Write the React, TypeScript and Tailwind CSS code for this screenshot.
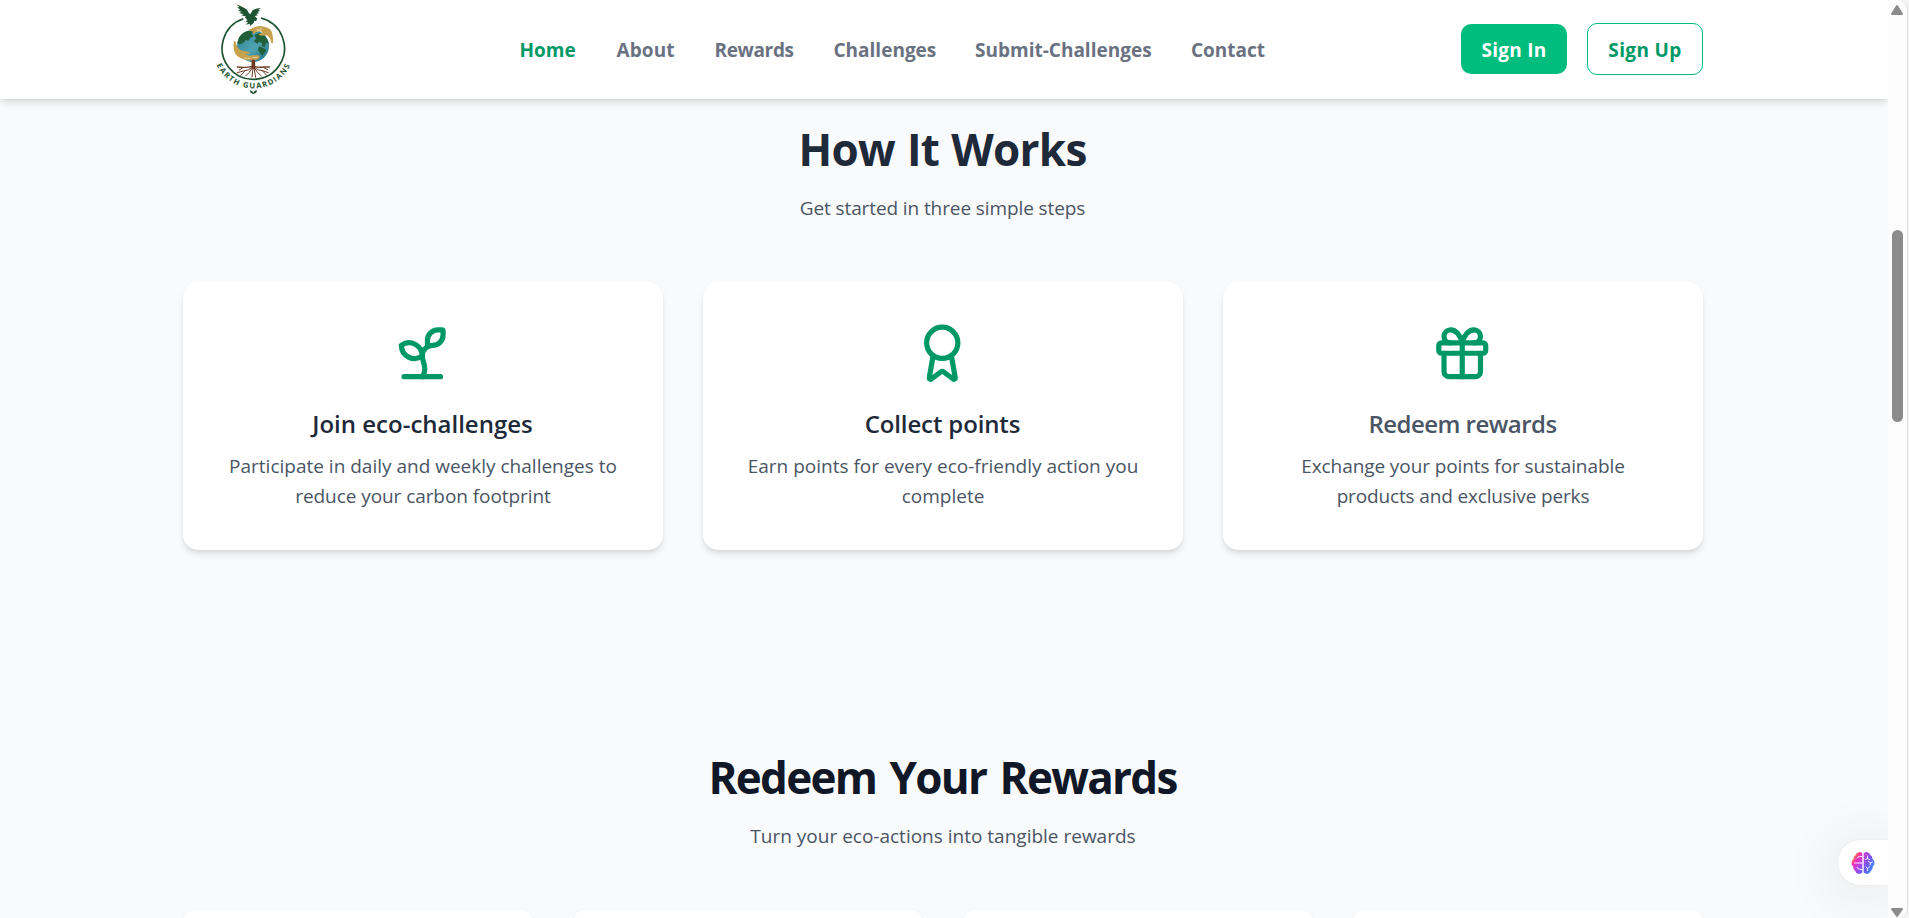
import type { ReactNode } from "react";

const NAV = [
  { label: "Home", style: "text-[#009966] w-[57px]" },
  { label: "About", style: "text-[#6a7282] w-[58px] tracking-[0.1px]" },
  { label: "Rewards", style: "text-[#6a7282] w-[79px] tracking-[-0.35px]" },
  { label: "Challenges", style: "text-[#6a7282] w-[101.5px]" },
  { label: "Submit-Challenges", style: "text-[#6a7282] w-[176px]" },
  { label: "Contact", style: "text-[#6a7282] w-[73px]" },
];

function Logo() {
  return (
    <svg className="block h-[99px] w-[110px]" viewBox="0 0 330 297" role="img" aria-label="Earth Guardians">
      <defs>
        <path id="logo-arc" d="M50 195A122.500 122.500 0 0 0 282 161" />
        <linearGradient id="ocean" x1="0" y1="0" x2="1" y2="1">
          <stop offset="0" stopColor="#2b7f93" />
          <stop offset="0.55" stopColor="#4fa3b2" />
          <stop offset="1" stopColor="#1c6a7d" />
        </linearGradient>
      </defs>
      <path d="M130 56A93.500 93.500 0 1 0 183 54" fill="none" stroke="#1d5330" strokeWidth="5" />
      <path
        d="M110 13L126 20Q142 26 146 39L151 43L158 31Q166 25 183 24L175 30L181 32L172 36L178 39L169 42L174 46L164 48L172 56L168 63L162 62L161 69L150 78L149 71L137 74L145 66L136 65L142 60L134 51L140 50L124 46L131 43L117 39L125 36L113 31L121 29L111 22L118 22Z"
        fill="#1d5330"
      />
      <circle cx="159" cy="138" r="48" fill="url(#ocean)" />
      <path
        d="M117 112Q128 96 143 93L160 94L154 101L161 108L151 113L145 122L137 120L130 129L119 133L112 129Z"
        fill="#22603a"
      />
      <path
        d="M164 105L178 98L191 103Q204 117 207 133L198 128L194 142L185 138L187 130L176 126L172 132L161 123L168 116Z"
        fill="#22603a"
      />
      <path d="M177 139L190 144L199 150L187 167L180 160L174 150Z" fill="#22603a" />
      <path
        d="M145 91L158 84Q180 75 191 80Q206 82 213 91Q220 104 219 129L214 129Q212 112 200 106L183 107L174 102L188 99L184 94L169 96L157 104L160 95Z"
        fill="#c8a14d"
      />
      <path
        d="M102 123L107 125Q111 144 122 151L145 155L151 161L136 161L148 168L160 166L177 166L179 174Q165 184 141 180Q114 176 105 160Q98 143 102 123Z"
        fill="#c8a14d"
      />
      <path d="M169 90l17-4M171 94l12-3M132 174l19 1M158 173l14-1" stroke="#fff" strokeWidth="1.500" />
      <g fill="none" stroke="#6d3a22" strokeLinecap="round">
        <path d="M160 184v18" strokeWidth="11" />
        <path d="M157 199Q142 203 130 202L112 201M163 199Q176 203 190 201L208 201" strokeWidth="4" />
        <path
          d="M157 202Q146 212 130 213L112 218M163 202Q175 212 190 213L205 218M156 205Q149 218 137 228M164 205Q171 218 184 228M159 204L156 231M162 204L167 232M136 211L122 227M186 211L200 226M129 203L118 210M191 203L203 209"
          strokeWidth="3"
        />
      </g>
      <text className="font-['Open_Sans',sans-serif] font-bold" fontSize="23" fill="#1d5330">
        <textPath href="#logo-arc" textLength="274" lengthAdjust="spacing">
          EARTH GUARDIANS
        </textPath>
      </text>
      <path d="M160 282Q149 280 150 271Q157 272 160 278Q164 271 171 271Q171 280 160 282Z" fill="#1d5330" />
    </svg>
  );
}

function Icon({ children }: { children: ReactNode }) {
  return (
    <svg
      className="mr-[2px] size-[62.5px] text-[#009966]"
      viewBox="0 0 24 24"
      fill="none"
      stroke="currentColor"
      strokeWidth="2"
      strokeLinecap="round"
      strokeLinejoin="round"
    >
      {children}
    </svg>
  );
}

const STEPS = [
  {
    title: "Join eco-challenges",
    titleStyle: "text-[#1e2939]",
    lines: [
      { text: "Participate in daily and weekly challenges to", style: "" },
      { text: "reduce your carbon footprint", style: "tracking-[-0.07px]" },
    ],
    icon: (
      <Icon>
        <path d="M14 9.536V7a4 4 0 0 1 4-4h1.5a.5.5 0 0 1 .5.5V5a4 4 0 0 1-4 4 4 4 0 0 0-4 4c0 2 1 3 1 5a5 5 0 0 1-1 3" />
        <path d="M4 9a5 5 0 0 1 8 4 5 5 0 0 1-8-4" />
        <path d="M5 21h14" />
      </Icon>
    ),
  },
  {
    title: "Collect points",
    titleStyle: "text-[#1e2939] tracking-[-0.13px]",
    lines: [
      { text: "Earn points for every eco-friendly action you", style: "" },
      { text: "complete", style: "" },
    ],
    icon: (
      <Icon>
        <path d="m15.477 12.89 1.515 8.526a.5.5 0 0 1-.81.47l-3.58-2.687a1 1 0 0 0-1.197 0l-3.586 2.686a.5.5 0 0 1-.81-.469l1.514-8.526" />
        <circle cx="12" cy="8" r="6" />
      </Icon>
    ),
  },
  {
    title: "Redeem rewards",
    titleStyle: "text-[#4a5565] tracking-[-0.53px]",
    lines: [
      { text: "Exchange your points for sustainable", style: "tracking-[-0.09px]" },
      { text: "products and exclusive perks", style: "tracking-[-0.15px]" },
    ],
    icon: (
      <Icon>
        <rect x="3" y="8" width="18" height="4" rx="1" />
        <path d="M12 8v13" />
        <path d="M19 12v7a2 2 0 0 1-2 2H7a2 2 0 0 1-2-2v-7" />
        <path d="M7.5 8a2.5 2.5 0 0 1 0-5A4.8 8 0 0 1 12 8a4.8 8 0 0 1 4.5-5 2.5 2.5 0 0 1 0 5" />
      </Icon>
    ),
  },
];

function Header() {
  return (
    <header className="relative z-10 h-[99px] shrink-0 bg-white pl-[183px] shadow-[0_5px_7.5px_-1px_rgba(0,0,0,0.1),0_2.5px_5px_-2.5px_rgba(0,0,0,0.1)]">
      <div className="flex h-full w-[1520px] items-center pl-[17px]">
        <Logo />
        <nav className="ml-[209.5px] flex gap-10 text-[19px] leading-[30px] font-bold">
          {NAV.map((n) => (
            <a key={n.label} href="#" className={`whitespace-nowrap ${n.style}`}>
              {n.label}
            </a>
          ))}
        </nav>
        <div className="mb-px ml-auto flex items-center gap-5 text-[19px] leading-[30px] font-bold">
          <button className="h-[50px] w-[106px] rounded-[10px] bg-[#00bc7d] pt-px tracking-[0.25px] text-white">Sign In</button>
          <button className="h-[52px] w-[116px] rounded-[10px] border border-[#00bc7d] pt-px tracking-[0.35px] text-[#009966]">
            Sign Up
          </button>
        </div>
      </div>
    </header>
  );
}

function Brain() {
  return (
    <svg className="size-6" viewBox="0 0 24 24">
      <defs>
        <linearGradient id="brain-left" x1="0.1" y1="0" x2="0.8" y2="1">
          <stop offset="0.1" stopColor="#ff9a1f" />
          <stop offset="0.4" stopColor="#f02fb4" />
          <stop offset="0.7" stopColor="#b844e8" />
          <stop offset="1" stopColor="#6a5cf5" />
        </linearGradient>
        <linearGradient id="brain-right" x1="0" y1="0" x2="0.9" y2="1">
          <stop offset="0" stopColor="#d63fc8" />
          <stop offset="0.45" stopColor="#7a55ee" />
          <stop offset="1" stopColor="#1fa0ff" />
        </linearGradient>
      </defs>
      <path
        d="M11.300 2.500Q10 .8 7.500 1.200Q5 1.700 4.600 4Q2.300 5 2.600 7.800Q.3 9.500 .5 12.300Q.6 14.500 2.300 15.600Q1.800 18.500 4.200 20Q5 22.600 7.600 22.900Q10 23 11.300 21.500Z"
        fill="url(#brain-left)"
      />
      <path
        d="M12.700 2.500Q14 .8 16.500 1.200Q19 1.700 19.400 4Q21.700 5 21.400 7.800Q23.700 9.500 23.500 12.300Q23.400 14.500 21.700 15.600Q22.200 18.500 19.800 20Q19 22.600 16.400 22.900Q14 23 12.700 21.500Z"
        fill="url(#brain-right)"
      />
      <g fill="none" stroke="#fff" strokeWidth="0.900" strokeLinecap="round">
        <path d="M11 5.500H8.500Q7 5.500 6 7M3.500 12H11M6 16.500Q6.500 18.500 11 18.500" />
        <path d="M16.500 5v2.500M14.500 8.500l2-1 2 1M17.500 10.500l2 1.500 2-1M19.500 12l-.5 2M14.800 15.800l1.700 1.700 2-1.500M16.500 17.500v2" />
      </g>
    </svg>
  );
}

function Scrollbar() {
  return (
    <aside className="flex w-[21px] shrink-0 bg-[#f3f3f3]">
      <div className="flex w-[20px] flex-col items-center rounded-r-[10px] border-r border-[#e2e2e2] bg-[#fcfcfc] pr-px">
        <svg className="mt-[4px] h-[12px] w-[14px]" viewBox="0 0 14 12">
          <path d="M7 2L12 10H2Z" fill="#8b8b8b" stroke="#8b8b8b" strokeWidth="2" strokeLinejoin="round" />
        </svg>
        <div className="mt-[214px] h-[192px] w-[11px] rounded-full bg-[#8b8b8b]" />
        <svg className="mt-auto h-[12px] w-[14px]" viewBox="0 0 14 12">
          <path d="M7 10L12 3H2Z" fill="#8b8b8b" stroke="#8b8b8b" strokeWidth="2" strokeLinejoin="round" />
        </svg>
      </div>
    </aside>
  );
}

export default function App() {
  return (
    <div className="flex h-[918px] w-full overflow-hidden bg-[#f9fafc] font-['Open_Sans','Noto_Sans',sans-serif] text-[19px] leading-[30px] text-[#4a5565]">
      <div className="relative flex min-w-0 flex-1 flex-col overflow-hidden">
        <Header />
        <main className="w-[1703px] pl-[183px]">
          <section className="pt-[25px] text-center">
            <h2 className="pr-px text-[44px] leading-[50px] font-bold tracking-[-0.75px] text-[#1e2939] [word-spacing:1.5px]">
              How It Works
            </h2>
            <p className="mt-[19px] pr-px tracking-[-0.1px]">Get started in three simple steps</p>
            <div className="mt-[59px] grid grid-cols-3 gap-10">
              {STEPS.map((s) => (
                <article
                  key={s.title}
                  className="flex h-[268px] flex-col items-center rounded-[15px] bg-white pt-10 shadow-[0_5px_7.5px_-1px_rgba(0,0,0,0.1),0_2.5px_5px_-2.5px_rgba(0,0,0,0.1)]"
                >
                  {s.icon}
                  <h3 className={`mt-[21.5px] pr-px text-[24px] leading-[35px] font-semibold ${s.titleStyle}`}>{s.title}</h3>
                  <p className="mt-[10px] flex flex-col">
                    {s.lines.map((l) => (
                      <span key={l.text} className={l.style}>
                        {l.text}
                      </span>
                    ))}
                  </p>
                </article>
              ))}
            </div>
          </section>
          <section className="pt-[202px] text-center">
            <h2 className="pr-px text-[44px] leading-[50px] font-bold tracking-[-1.7px] text-[#101828] [word-spacing:3.5px]">
              Redeem Your Rewards
            </h2>
            <p className="mt-[19px]">Turn your eco-actions into tangible rewards</p>
            <div className="mt-[59px] grid grid-cols-4 gap-10">
              {[0, 1, 2, 3].map((i) => (
                <article key={i} className="h-[300px] rounded-[12px] bg-white shadow-[0_1px_4px_rgba(0,0,0,0.05)]" />
              ))}
            </div>
          </section>
        </main>
        <button
          aria-label="Assistant"
          className="absolute right-0 bottom-[33px] flex h-[45px] w-[50px] items-center rounded-l-full bg-white pl-[13px] shadow-[0_6px_60px_rgba(0,0,0,0.12),0_0_2px_rgba(0,0,0,0.08)]"
        >
          <Brain />
        </button>
      </div>
      <Scrollbar />
    </div>
  );
}
